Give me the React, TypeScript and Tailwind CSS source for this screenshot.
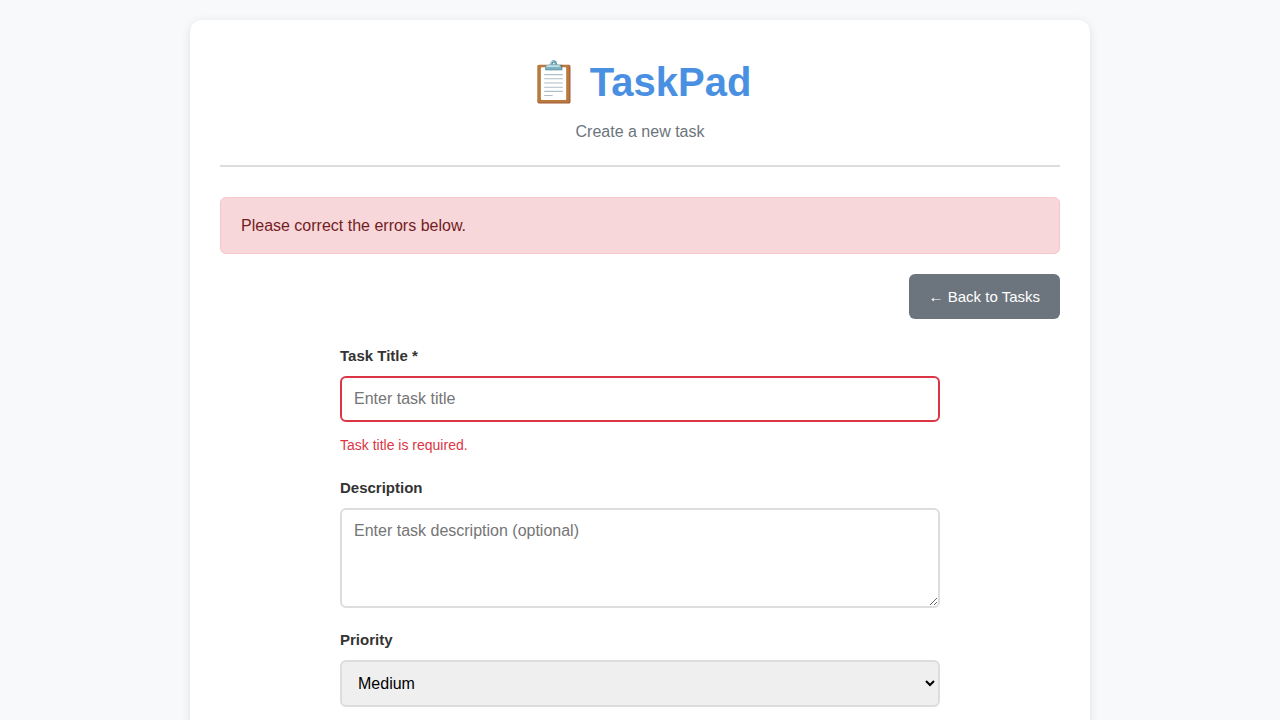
import { useState } from "react";

const labelClass = "mb-2 block text-[15px] leading-6 font-semibold text-[#333333]";

export default function App() {
  const [title, setTitle] = useState("");
  const [description, setDescription] = useState("");
  const [priority, setPriority] = useState("medium");

  return (
    <div className="min-h-screen bg-[#f8f9fa] p-5 font-['Liberation_Sans',Arial,sans-serif] text-base leading-[26px] text-[#333333]">
      <main className="mx-auto max-w-[900px] rounded-xl bg-white p-[30px] shadow-[0_2px_10px_rgba(0,0,0,0.1)]">
        <header className="mb-[30px] border-b-2 border-[#dddddd] pb-5 text-center">
          <h1 className="mb-[5px] text-[40px] leading-[64px] font-bold text-[#4a90e2]">📋 TaskPad</h1>
          <p className="text-[#6c757d]">Create a new task</p>
        </header>

        <div role="alert" className="mb-5 rounded-md border border-[#f5c6cb] bg-[#f8d7da] px-5 py-[15px] leading-[25px] text-[#721c24]">
          Please correct the errors below.
        </div>

        <div className="mb-[25px] flex justify-end">
          <a href="#tasks" className="rounded-md bg-[#6c757d] px-5 py-[10px] text-[15px] leading-[25px] text-white">
            ← Back to Tasks
          </a>
        </div>

        <form noValidate className="mx-auto max-w-[600px]" onSubmit={(e) => e.preventDefault()}>
          <div className="mb-5">
            <label htmlFor="title" className={labelClass}>Task Title *</label>
            <input
              id="title"
              type="text"
              placeholder="Enter task title"
              aria-invalid="true"
              aria-describedby="title-error"
              value={title}
              onChange={(e) => setTitle(e.target.value)}
              className="block w-full rounded-md border-2 border-[#dc3545] bg-white p-3 text-base leading-[18px] placeholder:text-[#757575]"
            />
            <p id="title-error" className="mt-3 text-sm leading-[22px] text-[#dc3545]">Task title is required.</p>
          </div>

          <div className="mb-5">
            <label htmlFor="description" className={labelClass}>Description</label>
            <textarea
              id="description"
              placeholder="Enter task description (optional)"
              value={description}
              onChange={(e) => setDescription(e.target.value)}
              className="block h-[100px] w-full resize-y rounded-md border-2 border-[#dddddd] bg-white p-3 text-base leading-[18px] placeholder:text-[#757575]"
            />
          </div>

          <div className="mb-5">
            <label htmlFor="priority" className={labelClass}>Priority</label>
            <select
              id="priority"
              value={priority}
              onChange={(e) => setPriority(e.target.value)}
              className="block w-full rounded-md border-2 border-[#dddddd] bg-[#efefef] p-3 text-base leading-[19px] text-black"
            >
              <option value="low">Low</option>
              <option value="medium">Medium</option>
              <option value="high">High</option>
            </select>
          </div>
        </form>
      </main>
    </div>
  );
}
